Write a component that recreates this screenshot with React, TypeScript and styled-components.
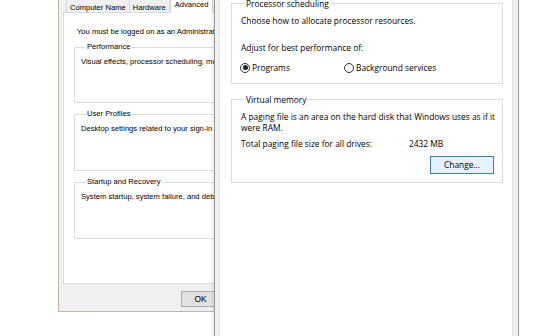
import React from 'react';
import styled, { createGlobalStyle } from 'styled-components';

const GlobalStyle = createGlobalStyle`
  html, body {
    margin: 0;
    padding: 0;
    background: #fff;
  }
  body {
    width: 560px;
    height: 336px;
    overflow: hidden;
  }
`;

const Desktop = styled.div`
  position: relative;
  width: 560px;
  height: 336px;
  overflow: hidden;
  background: #fff;
`;

// windows sit on a free desktop, so they are placed by coordinates
const Window = styled.div<{ $left: number; $top: number; $width: number; $height: number; $z: number }>`
  position: absolute;
  left: ${({ $left }) => $left}px;
  top: ${({ $top }) => $top}px;
  width: ${({ $width }) => $width}px;
  height: ${({ $height }) => $height}px;
  z-index: ${({ $z }) => $z};
  box-sizing: border-box;
  background: #f0f0f0;
  display: flex;
  flex-direction: column;
  overflow: hidden;
`;

/* ---------- back dialog: System Properties ---------- */

const BackWindow = styled(Window)`
  border: 1px solid #bfb6aa;
  border-right: none;
  padding: 3px 0 0 4px;
  font-family: 'Liberation Sans', Arial, sans-serif;
  font-size: 7.6px;
  color: #000;
`;

const TabStrip = styled.div`
  display: flex;
  align-items: flex-end;
  padding-left: 3px;
  height: 13px;
  position: relative;
  z-index: 1;
`;

const Tab = styled.div<{ $active?: boolean }>`
  box-sizing: border-box;
  height: ${({ $active }) => ($active ? 16 : 14)}px;
  padding: ${({ $active }) => ($active ? '2px 4px 0' : '3px 3px 0')};
  margin-left: ${({ $active }) => ($active ? 0 : -1)}px;
  border: 1px solid #d9d9d9;
  border-bottom: ${({ $active }) => ($active ? 'none' : '1px solid #d9d9d9')};
  background: ${({ $active }) => ($active ? '#fff' : '#f0f0f0')};
  white-space: nowrap;
  &:first-child {
    margin-left: 0;
  }
`;

const TabPanel = styled.div`
  box-sizing: border-box;
  width: 220px;
  height: 272px;
  background: #fff;
  border: 1px solid #d9d9d9;
  margin-top: -1px;
  padding: 14px 0 0 10px;
  display: flex;
  flex-direction: column;
`;

const Notice = styled.div`
  padding-left: 3px;
  white-space: nowrap;
  line-height: 10px;
  margin-bottom: 5px;
`;

const BackGroup = styled.fieldset`
  margin: 0 0 6px;
  padding: 5px 0 0 6px;
  border: 1px solid #dcdcdc;
  height: 62px;
  box-sizing: border-box;
  white-space: nowrap;
  line-height: 10px;
  & legend {
    padding: 0 1px;
    margin-left: 5px;
  }
  &:first-of-type {
    height: 61px;
  }
`;

const BackFooter = styled.div`
  display: flex;
  padding: 7px 0 0 118px;
`;

const BackButton = styled.div`
  box-sizing: border-box;
  width: 40px;
  height: 16px;
  border: 1px solid #adadad;
  background: #e1e1e1;
  text-align: center;
  line-height: 14px;
  font-size: 8.4px;
`;

/* ---------- front dialog: Performance Options ---------- */

const FrontWindow = styled(Window)`
  border: 1px solid #9a9a96;
  padding: 0 5px 0 4px;
  font-family: 'Open Sans', 'Noto Sans', sans-serif;
  font-size: 8.4px;
  color: #000;
  box-shadow: -1px 0 3px rgba(0, 0, 0, 0.12);
`;

const FrontPanel = styled.div`
  flex: 1;
  background: #fff;
  border: 1px solid #e3e3e3;
  padding: 6px 9px 0 11px;
  display: flex;
  flex-direction: column;
`;

const Group = styled.fieldset<{ $gap?: number }>`
  margin: ${({ $gap }) => $gap ?? 0}px 0 0;
  padding: 0 8px 0 9px;
  border: 1px solid #dcdcdc;
  min-width: 0;
  line-height: 11px;
  & legend {
    padding: 0 1px;
    margin-left: 4px;
  }
`;

const Line = styled.div<{ $top?: number }>`
  margin-top: ${({ $top }) => $top ?? 0}px;
  white-space: nowrap;
`;

const RadioRow = styled.div`
  display: flex;
  align-items: center;
  margin-top: 9px;
  margin-left: -1px;
  margin-bottom: 10px;
`;

const RadioOption = styled.div<{ $width?: number }>`
  display: flex;
  align-items: center;
  gap: 2px;
  width: ${({ $width }) => ($width ? `${$width}px` : 'auto')};
`;

const RadioDot = styled.span<{ $checked?: boolean }>`
  box-sizing: border-box;
  flex-shrink: 0;
  width: 10px;
  height: 10px;
  border-radius: 50%;
  border: 1px solid #333;
  background: #fff;
  display: flex;
  align-items: center;
  justify-content: center;
  &::after {
    content: '';
    width: 5px;
    height: 5px;
    border-radius: 50%;
    background: ${({ $checked }) => ($checked ? '#222' : 'transparent')};
  }
`;

const SizeRow = styled.div`
  display: grid;
  grid-template-columns: 168px auto;
  margin-top: 5px;
  white-space: nowrap;
`;

const ButtonRow = styled.div`
  display: flex;
  justify-content: flex-end;
  margin: 7px 0 8px;
`;

const Button = styled.div`
  box-sizing: border-box;
  width: 64px;
  height: 18px;
  border: 1px solid #3c7fb1;
  background: #e5f1fb;
  text-align: center;
  line-height: 16px;
`;

export default function App() {
  return (
    <>
      <GlobalStyle />
      <Desktop>
        <BackWindow $left={58} $top={-4} $width={162} $height={316} $z={1}>
          <TabStrip>
            <Tab>Computer Name</Tab>
            <Tab>Hardware</Tab>
            <Tab $active>Advanced</Tab>
          </TabStrip>
          <TabPanel>
            <Notice>You must be logged on as an Administrator to make most of these changes.</Notice>
            <BackGroup>
              <legend>Performance</legend>
              Visual effects, processor scheduling, memory usage, and virtual memory
            </BackGroup>
            <BackGroup>
              <legend>User Profiles</legend>
              Desktop settings related to your sign-in
            </BackGroup>
            <BackGroup>
              <legend>Startup and Recovery</legend>
              System startup, system failure, and debugging information
            </BackGroup>
          </TabPanel>
          <BackFooter>
            <BackButton>OK</BackButton>
          </BackFooter>
        </BackWindow>

        <FrontWindow $left={214} $top={-10} $width={305} $height={360} $z={2}>
          <FrontPanel>
            <Group>
              <legend>Processor scheduling</legend>
              <Line $top={6}>Choose how to allocate processor resources.</Line>
              <Line $top={16}>Adjust for best performance of:</Line>
              <RadioRow>
                <RadioOption $width={104}>
                  <RadioDot $checked />
                  Programs
                </RadioOption>
                <RadioOption>
                  <RadioDot />
                  Background services
                </RadioOption>
              </RadioRow>
            </Group>
            <Group $gap={10}>
              <legend>Virtual memory</legend>
              <Line $top={6}>A paging file is an area on the hard disk that Windows uses as if it</Line>
              <Line>were RAM.</Line>
              <SizeRow>
                <span>Total paging file size for all drives:</span>
                <span>2432 MB</span>
              </SizeRow>
              <ButtonRow>
                <Button>Change...</Button>
              </ButtonRow>
            </Group>
          </FrontPanel>
        </FrontWindow>
      </Desktop>
    </>
  );
}
